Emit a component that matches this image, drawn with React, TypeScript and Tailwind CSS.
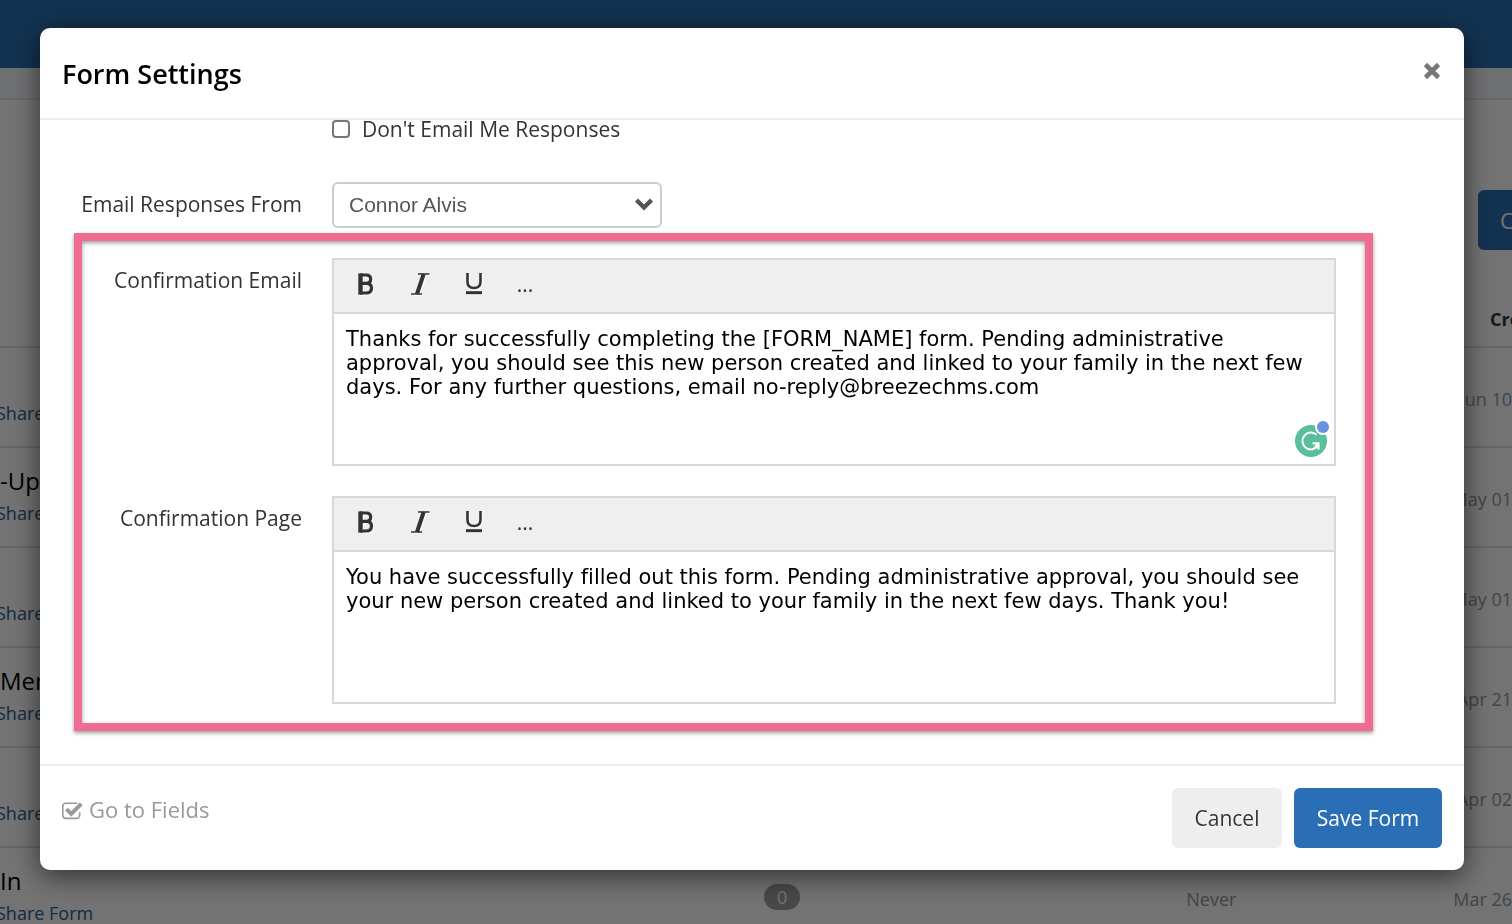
import { useState } from "react";
import type { ReactNode } from "react";

const forms = [
  { name: "", responses: null, lastEntry: "", created: "Jun 10" },
  { name: "-Up", responses: null, lastEntry: "", created: "May 01" },
  { name: "", responses: null, lastEntry: "", created: "May 01" },
  { name: "Men", responses: null, lastEntry: "", created: "Apr 21" },
  { name: "", responses: null, lastEntry: "", created: "Apr 02" },
  { name: "In", responses: 0, lastEntry: "Never", created: "Mar 26" }
];

const confirmationEmail =
  "Thanks for successfully completing the [FORM_NAME] form. Pending administrative approval, you should see this new person created and linked to your family in the next few days. For any further questions, email no-reply@breezechms.com";

const confirmationPage =
  "You have successfully filled out this form. Pending administrative approval, you should see your new person created and linked to your family in the next few days. Thank you!";

function BoldIcon() {
  return (
    <svg className="h-6 w-6" viewBox="0 0 24 24" fill="none" stroke="currentColor">
      <path
        d="M6 3h6c3.400 0 4.700 1.600 4.700 4.100s-1.500 4.200-4.400 4.200H6M12 11.300c4 0 5.500 1.700 5.500 4.600 0 3-1.800 5.100-5.500 5.100H6"
        strokeWidth="3.200"
      />
      <path d="M6.500 1.400v21.200" strokeWidth="4.400" />
    </svg>
  );
}

function ItalicIcon() {
  return (
    <svg className="h-6 w-6" viewBox="0 0 24 24" fill="none" stroke="currentColor">
      <path d="M10 2h11.500M3 22h11" strokeWidth="1.600" />
      <path d="M15.700 2 9 22" strokeWidth="4" />
    </svg>
  );
}

function UnderlineIcon() {
  return (
    <svg className="h-6 w-6" viewBox="0 0 24 24" fill="none" stroke="currentColor">
      <path d="M5.500 1v8.700c0 4.200 2.400 6.300 6.500 6.300s6.500-2.100 6.500-6.300V1" strokeWidth="2.600" />
      <path d="M4 20.700h16" strokeWidth="3" />
    </svg>
  );
}

function GrammarlyBadge() {
  return (
    <svg className="absolute right-1 bottom-[7px] h-9 w-9" viewBox="0 0 36 36" fill="none" aria-hidden="true">
      <circle cx="17" cy="20" r="16" fill="#57bf9a" />
      <path d="M22.500 13.800A8.400 8.400 0 1 0 23.800 24.600" stroke="#fff" strokeWidth="2" />
      <path d="M18.500 22.400h6v6" stroke="#fff" strokeWidth="2.200" />
      <path d="M24.500 22.400l-4 4" stroke="#fff" strokeWidth="1.600" />
      <circle cx="29" cy="6" r="8" fill="#fff" />
      <circle cx="29" cy="6" r="6" fill="#6690e4" />
    </svg>
  );
}

function ToolButton({ label, children }: { label: string; children: ReactNode }) {
  return (
    <button
      type="button"
      aria-label={label}
      className="flex h-12 w-[54px] items-center justify-center drop-shadow-[1px_1px_0_#fff]"
    >
      {children}
    </button>
  );
}

function Editor({ id, label, text, badge }: { id: string; label: string; text: string; badge?: boolean }) {
  return (
    <div className="flex gap-[30px]">
      <label htmlFor={id} className="w-[220px] shrink-0 pt-1.5 text-right leading-8">
        {label}
      </label>
      <div className="relative min-w-0 flex-1 border-2 border-[#d8d8d8]">
        <div className="flex h-[54px] border-b-2 border-[#d8d8d8] bg-[#efefef] pl-[5px]">
          <ToolButton label="Bold">
            <BoldIcon />
          </ToolButton>
          <ToolButton label="Italic">
            <ItalicIcon />
          </ToolButton>
          <ToolButton label="Underline">
            <UnderlineIcon />
          </ToolButton>
          <button type="button" aria-label="More" className="flex h-[50px] w-12 items-center justify-center">
            ...
          </button>
        </div>
        <textarea
          id={id}
          defaultValue={text}
          spellCheck={false}
          className="block h-[150px] w-full resize-none px-3 py-[13px] font-['DejaVu_Sans',sans-serif] text-[21px] leading-6 text-black outline-none [font-variant-ligatures:none]"
        />
        {badge && <GrammarlyBadge />}
      </div>
    </div>
  );
}

function FormsPage() {
  return (
    <div aria-hidden="true" className="h-screen overflow-hidden bg-white">
      <div className="h-[68px] bg-[#2b70b3]" />
      <div className="h-8 border-b-2 border-[#e4e8ec] bg-[#f7f9fc]" />
      <div className="flex justify-end pt-[90px]">
        <button
          type="button"
          className="h-[60px] w-[34px] overflow-hidden rounded-l-md bg-[#2b70b3] pl-[22px] text-left text-[22px] text-white"
        >
          C
        </button>
      </div>
      <table className="w-full table-fixed text-lg">
        <thead>
          <tr className="h-[97px] border-b-2 border-[#e0e0e0]">
            <th className="w-[48%]" />
            <th className="w-[9%]" />
            <th className="w-[43%]" />
            <th className="w-[22px] pt-[42px] text-left font-bold whitespace-nowrap text-[#333]">Created</th>
          </tr>
        </thead>
        <tbody>
          {forms.map((form, index) => (
            <tr key={index} className="h-[100px] border-b-2 border-[#e0e0e0]">
              <td className="align-top whitespace-nowrap">
                <div className="mt-[15px] h-9 text-2xl leading-9 text-black">{form.name}</div>
                <a href="#share" className="-ml-1 block leading-7 text-[#285f96]">
                  Share Form
                </a>
              </td>
              <td className="text-center">
                {form.responses !== null && (
                  <span className="inline-block h-[26px] w-9 rounded-full bg-[#a0a0a0] text-center leading-[26px] text-white">
                    {form.responses}
                  </span>
                )}
              </td>
              <td className="pt-[3px] pl-[337px] text-[#979797]">{form.lastEntry}</td>
              <td className="pt-[3px] text-[#979797]">
                <div className="flex justify-end whitespace-nowrap">{form.created}</div>
              </td>
            </tr>
          ))}
        </tbody>
      </table>
    </div>
  );
}

export default function App() {
  const [muted, setMuted] = useState(false);

  return (
    <div className="font-['Open_Sans',sans-serif]">
      <FormsPage />
      <div className="fixed inset-0 overflow-auto bg-black/55 pt-7 pr-12 pb-7 pl-10">
        <div
          role="dialog"
          aria-labelledby="form-settings-title"
          className="rounded-[10px] bg-white text-[21px] text-[#333] shadow-[0_6px_28px_rgba(0,0,0,0.6)]"
        >
          <div className="flex h-[92px] items-center justify-between border-b-2 border-[#eeeeee] px-[22px]">
            <h1 id="form-settings-title" className="pt-0.5 text-[27px] font-semibold text-black">
              Form Settings
            </h1>
            <button type="button" aria-label="Close" className="pb-1 text-[#777]">
              <svg className="h-5 w-5" viewBox="0 0 20 20" fill="none" stroke="currentColor" strokeWidth="4.600">
                <path d="M3.500 3.500l13 13M16.500 3.500l-13 13" />
              </svg>
            </button>
          </div>

          <div className="pb-[33px]">
            <label className="flex items-center gap-3 pl-[292px] leading-[18px]">
              <input
                type="checkbox"
                checked={muted}
                onChange={(e) => setMuted(e.target.checked)}
                className="h-[18px] w-[18px] appearance-none rounded-[4px] border-2 border-[#767676] bg-white checked:bg-[#2a6fb5]"
              />
              Don't Email Me Responses
            </label>

            <div className="mt-11 flex items-center gap-[30px]">
              <label htmlFor="from" className="w-[262px] text-right">
                Email Responses From
              </label>
              <div className="relative w-[330px]">
                <select
                  id="from"
                  className="h-[46px] w-full appearance-none rounded-md border-2 border-[#ccc] bg-white px-[15px] font-['Liberation_Sans',sans-serif] text-[21px] text-[#555]"
                >
                  <option>Connor Alvis</option>
                </select>
                <svg
                  className="pointer-events-none absolute top-3 right-2 h-5 w-5 text-[#555]"
                  viewBox="0 0 20 20"
                  fill="none"
                  stroke="currentColor"
                  strokeWidth="4.400"
                >
                  <path d="M2.500 6l7.500 7.500 7.500-7.500" />
                </svg>
              </div>
            </div>

            <div className="mt-[5px] mr-[91px] ml-[34px] flex flex-col gap-[30px] border-8 border-[#ef6d92] pt-[17px] pr-[29px] pb-[19px] shadow-[0_2px_4px_rgba(0,0,0,0.4),inset_0_2px_4px_rgba(0,0,0,0.4)]">
              <Editor id="confirmation-email" label="Confirmation Email" text={confirmationEmail} badge />
              <Editor id="confirmation-page" label="Confirmation Page" text={confirmationPage} />
            </div>
          </div>

          <div className="flex items-start justify-between border-t-2 border-[#eeeeee] px-[22px] py-[22px]">
            <a href="#fields" className="flex items-center gap-1.5 pt-[5px] text-[22px] text-[#999]">
              <svg className="h-[21px] w-[21px]" viewBox="0 0 21 21" fill="none" stroke="currentColor">
                <path
                  d="M15.500 4.200H4A3.200 3.200 0 0 0 .8 7.400v8.800A3.200 3.200 0 0 0 4 19.400h10.500a3.200 3.200 0 0 0 3.200-3.200v-3"
                  strokeWidth="1.600"
                />
                <path d="M4.500 10.200l4.700 4.700L19.300 4.800" strokeWidth="4" />
              </svg>
              Go to Fields
            </a>
            <div className="flex gap-3">
              <button
                type="button"
                className="h-[60px] w-[110px] rounded-md bg-[#eeeeee] pt-0.5 text-shadow-[0_1px_1px_#fff]"
              >
                Cancel
              </button>
              <button type="button" className="h-[60px] w-[148px] rounded-md bg-[#2a6fb5] pt-0.5 text-white">
                Save Form
              </button>
            </div>
          </div>
        </div>
      </div>
    </div>
  );
}
